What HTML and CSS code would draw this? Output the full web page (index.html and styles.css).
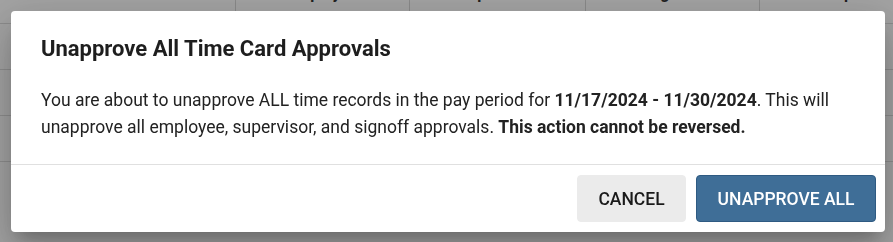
FILE: index.html
```html
<!DOCTYPE html>
<html lang="en">
<head>
<meta charset="utf-8">
<title>Unapprove All Time Card Approvals</title>
<link rel="stylesheet" href="styles.css">
</head>
<body>
<div class="page">
  <div class="table">
    <div class="row head">
      <div class="cell c1">Date</div>
      <div class="cell c2">Employee</div>
      <div class="cell c3">Supervisor</div>
      <div class="cell c4">Signoff</div>
      <div class="cell c5">Exceptions</div>
    </div>
    <div class="row"><div class="cell c1"></div><div class="cell c2"></div><div class="cell c3"></div><div class="cell c4"></div><div class="cell c5"></div></div>
    <div class="row"><div class="cell c1"></div><div class="cell c2"></div><div class="cell c3"></div><div class="cell c4"></div><div class="cell c5"></div></div>
    <div class="row"><div class="cell c1"></div><div class="cell c2"></div><div class="cell c3"></div><div class="cell c4"></div><div class="cell c5"></div></div>
  </div>
</div>
<div class="backdrop"></div>
<div class="dialog" role="dialog">
  <h2 class="dialog-title">Unapprove All Time Card Approvals</h2>
  <div class="dialog-content">
    <p>You are about to unapprove ALL time records in the pay period for <b>11/17/2024 - 11/30/2024</b>. This will unapprove all employee, supervisor, and signoff approvals. <b>This action cannot be reversed.</b></p>
  </div>
  <div class="dialog-actions">
    <button class="btn btn-cancel">Cancel</button>
    <button class="btn btn-primary">Unapprove All</button>
  </div>
</div>
</body>
</html>
```
FILE: styles.css
```css
html, body {
  margin: 0;
  padding: 0;
  background: #fff;
  font-family: Roboto, "Liberation Sans", sans-serif;
  overflow: hidden;
}
.page {
  width: 893px;
  height: 242px;
}
.table {
  margin-top: -24px;
}
.row {
  display: flex;
  height: 46px;
  border-bottom: 1px solid #ddd;
  box-sizing: border-box;
}
.row.head {
  height: 48px;
}
.cell {
  box-sizing: border-box;
  border-right: 1px solid #d8d8d8;
  display: flex;
  align-items: flex-start;
  justify-content: center;
  font-size: 16px;
  line-height: 20px;
  font-weight: 700;
  color: #333;
  padding-top: 8px;
}
.c1 { width: 236px; justify-content: flex-end; padding-right: 30px; }
.c2 { width: 174px; }
.c3 { width: 176px; }
.c4 { width: 174px; }
.c5 { flex: 1; border-right: none; justify-content: flex-start; padding-left: 50px; }
.backdrop {
  position: fixed;
  inset: 0;
  background: rgba(0, 0, 0, 0.36);
}
.dialog {
  position: fixed;
  left: 11px;
  top: 11px;
  width: 874px;
  height: 221px;
  background: #fff;
  border-radius: 4px;
  display: flex;
  flex-direction: column;
  box-shadow: 0 11px 15px -7px rgba(0,0,0,0.2), 0 24px 38px 3px rgba(0,0,0,0.14), 0 9px 46px 8px rgba(0,0,0,0.12);
  box-sizing: border-box;
}
.dialog-title {
  margin: 0;
  padding: 22px 30px 0;
  font-size: 22px;
  line-height: 32px;
  font-weight: 700;
  color: #1e1e1e;
}
.dialog-content {
  padding: 22px 30px 0;
  flex: 1;
}
.dialog-content p {
  margin: 0;
  font-size: 17.5px;
  line-height: 27px;
  color: #222;
}
.dialog-content b {
  font-weight: 700;
}
.dialog-actions {
  border-top: 1px solid #e0e0e0;
  display: flex;
  justify-content: flex-end;
  gap: 10px;
  padding: 10px 9px 10px;
}
.btn {
  height: 47px;
  border-radius: 4px;
  font-family: Roboto, "Liberation Sans", sans-serif;
  font-size: 17.5px;
  font-weight: 500;
  text-transform: uppercase;
  padding: 0 20.5px;
  cursor: pointer;
}
.btn-cancel {
  background: #ebebeb;
  border: 1px solid #ebebeb;
  color: #1a1a1a;
}
.btn-primary {
  background: #3f6e97;
  border: 1px solid #2e5a82;
  color: #fff;
}
```
